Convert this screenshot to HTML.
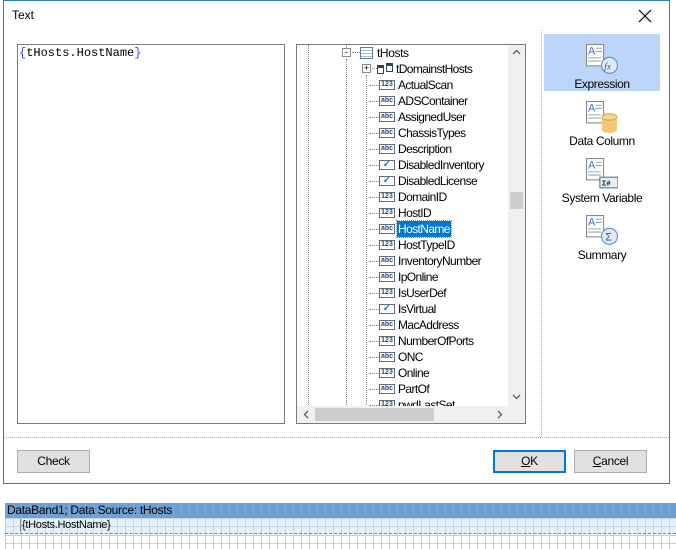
<!DOCTYPE html>
<html><head><meta charset="utf-8"><style>
*{margin:0;padding:0;box-sizing:border-box}
body{width:676px;height:549px;background:#fff;position:relative;overflow:hidden;font-family:"Liberation Sans",sans-serif;font-size:12px;color:#000}
.abs{position:absolute}
.win{left:3px;top:0;width:667px;height:484px;border:1px solid #2b79c9}
.btn{position:absolute;height:23px;background:#e1e1e1;border:1px solid #adadad;text-align:center;line-height:20px;font-size:12px;letter-spacing:-0.3px}
.row{position:absolute;left:0;height:16px;line-height:16px;white-space:nowrap;letter-spacing:-0.6px}
.ic{position:absolute;left:82px;top:3px;width:16px;height:10px;border:1px solid #5a6f88;font-size:7px;line-height:8px;text-align:center;font-weight:bold;color:#2d4a73;letter-spacing:0}
.dh{position:absolute;left:72px;top:8px;width:10px;border-top:1px dotted #888}
.tx{position:absolute;left:100px;top:0;padding:0 1px}
.lbl{position:absolute;width:116px;text-align:center;font-size:12px;letter-spacing:-0.4px}
</style></head><body>
<div class="abs win"></div>
<div class="abs" style="left:12px;top:8px;font-size:12px">Text</div>
<svg class="abs" style="left:638px;top:9px" width="14" height="14"><path d="M1 1L13 13M13 1L1 13" stroke="#000" stroke-width="1.2"/></svg>

<div class="abs" style="left:17px;top:44px;width:268px;height:380px;border:1px solid #7a7a7a"></div>
<div class="abs" style="left:19px;top:46px;font-family:'Liberation Mono',monospace;font-size:12px"><span style="color:#4040ff">{</span>tHosts.HostName<span style="color:#4040ff">}</span></div>

<div class="abs" style="left:296px;top:44px;width:230px;height:380px;border:1px solid #7a7a7a;overflow:hidden">
  <div class="abs" style="left:11px;top:0;height:362px;border-left:1px dotted #888"></div>
  <div class="abs" style="left:49px;top:0;height:3px;border-left:1px dotted #888"></div>
  <div class="abs" style="left:49px;top:14px;height:350px;border-left:1px dotted #888"></div>
  <div class="abs" style="left:69px;top:30px;height:340px;border-left:1px dotted #888"></div>
  <div class="abs" style="left:45px;top:3px;width:9px;height:9px;border:1px solid #888;background:#fff;font-size:9px;line-height:6px;text-align:center">-</div>
  <div class="abs" style="left:55px;top:7px;width:8px;border-top:1px dotted #888"></div>
  <div class="abs" style="left:63px;top:2px;width:13px;height:12px;border:1px solid #5a7aa8;background:repeating-linear-gradient(#fff 0 2px,#a9bdd6 2px 3px)"></div>
  <div class="abs" style="left:80px;top:0;line-height:16px;letter-spacing:-0.4px">tHosts</div>
  <div class="abs" style="left:65px;top:19px;width:9px;height:9px;border:1px solid #888;background:#fff;font-size:9px;line-height:7px;text-align:center">+</div>
  <div class="abs" style="left:75px;top:23px;width:5px;border-top:1px dotted #888"></div>
  <div class="abs" style="left:80px;top:20px;width:7px;height:9px;border:1px solid #345;border-top:3px solid #345"></div>
  <div class="abs" style="left:89px;top:18px;width:7px;height:9px;border:1px solid #345;border-top:3px solid #345"></div>
  <div class="abs" style="left:99px;top:16px;line-height:16px;letter-spacing:-0.6px">tDomainstHosts</div>
  <div class="abs" style="left:0;top:32px;width:212px">
   <div class="row" style="top:0"><div class="dh"></div><div class="ic">123</div><div class="tx">ActualScan</div></div>
   <div class="row" style="top:16px"><div class="dh"></div><div class="ic">abc</div><div class="tx">ADSContainer</div></div>
   <div class="row" style="top:32px"><div class="dh"></div><div class="ic">abc</div><div class="tx">AssignedUser</div></div>
   <div class="row" style="top:48px"><div class="dh"></div><div class="ic">abc</div><div class="tx">ChassisTypes</div></div>
   <div class="row" style="top:64px"><div class="dh"></div><div class="ic">abc</div><div class="tx">Description</div></div>
   <div class="row" style="top:80px"><div class="dh"></div><div class="ic" style="color:#3a6fc0;font-size:10px">✓</div><div class="tx">DisabledInventory</div></div>
   <div class="row" style="top:96px"><div class="dh"></div><div class="ic" style="color:#3a6fc0;font-size:10px">✓</div><div class="tx">DisabledLicense</div></div>
   <div class="row" style="top:112px"><div class="dh"></div><div class="ic">123</div><div class="tx">DomainID</div></div>
   <div class="row" style="top:128px"><div class="dh"></div><div class="ic">123</div><div class="tx">HostID</div></div>
   <div class="row" style="top:144px"><div class="dh"></div><div class="ic">abc</div><div class="tx" style="background:#0078d7;color:#fff;outline:1px dotted #e08020">HostName</div></div>
   <div class="row" style="top:160px"><div class="dh"></div><div class="ic">123</div><div class="tx">HostTypeID</div></div>
   <div class="row" style="top:176px"><div class="dh"></div><div class="ic">abc</div><div class="tx">InventoryNumber</div></div>
   <div class="row" style="top:192px"><div class="dh"></div><div class="ic">abc</div><div class="tx">IpOnline</div></div>
   <div class="row" style="top:208px"><div class="dh"></div><div class="ic">123</div><div class="tx">IsUserDef</div></div>
   <div class="row" style="top:224px"><div class="dh"></div><div class="ic" style="color:#3a6fc0;font-size:10px">✓</div><div class="tx">IsVirtual</div></div>
   <div class="row" style="top:240px"><div class="dh"></div><div class="ic">abc</div><div class="tx">MacAddress</div></div>
   <div class="row" style="top:256px"><div class="dh"></div><div class="ic">123</div><div class="tx">NumberOfPorts</div></div>
   <div class="row" style="top:272px"><div class="dh"></div><div class="ic">abc</div><div class="tx">ONC</div></div>
   <div class="row" style="top:288px"><div class="dh"></div><div class="ic">123</div><div class="tx">Online</div></div>
   <div class="row" style="top:304px"><div class="dh"></div><div class="ic">abc</div><div class="tx">PartOf</div></div>
   <div class="row" style="top:320px"><div class="dh"></div><div class="ic">123</div><div class="tx">pwdLastSet</div></div>
  </div>
  <div class="abs" style="left:211px;top:0;width:17px;height:361px;background:#f0f0f0"></div>
  <div class="abs" style="left:213px;top:147px;width:13px;height:17px;background:#cdcdcd"></div>
  <svg class="abs" style="left:215px;top:4px" width="9" height="6"><path d="M1 5L4.5 1.5L8 5" stroke="#606060" fill="none" stroke-width="1.3"/></svg>
  <svg class="abs" style="left:215px;top:349px" width="9" height="6"><path d="M1 1L4.5 4.5L8 1" stroke="#606060" fill="none" stroke-width="1.3"/></svg>
  <div class="abs" style="left:0;top:361px;width:228px;height:17px;background:#f0f0f0"></div>
  <div class="abs" style="left:18px;top:363px;width:119px;height:13px;background:#cdcdcd"></div>
  <svg class="abs" style="left:6px;top:365px" width="6" height="9"><path d="M5 1L1.5 4.5L5 8" stroke="#606060" fill="none" stroke-width="1.3"/></svg>
  <svg class="abs" style="left:200px;top:365px" width="6" height="9"><path d="M1 1L4.5 4.5L1 8" stroke="#606060" fill="none" stroke-width="1.3"/></svg>
</div>

<div class="abs" style="left:541px;top:30px;height:407px;border-left:1px dotted #aaa"></div>
<div class="abs" style="left:4px;top:437px;width:665px;border-top:1px dotted #aaa"></div>

<div class="abs" style="left:544px;top:34px;width:116px;height:57px;background:#bcd5f8"></div>
<svg class="abs" style="left:586px;top:44px" width="32" height="32" viewBox="0 0 30 30" >
 <rect x="0.5" y="0.5" width="16" height="20" fill="#fff" stroke="#888"/>
 <text x="2" y="10" font-size="10" font-family="Liberation Sans" fill="#3a6fc0">A</text>
 <path d="M9 4h6M9 7h6M2 13h12M2 16h12" stroke="#9aa"/>
 <circle cx="22" cy="20" r="7.5" fill="#dfe9f7" stroke="#5a8ad0"/>
 <text x="17" y="24" font-size="9" font-style="italic" font-family="Liberation Serif" fill="#2a5aa0">fx</text>
</svg>
<div class="lbl" style="left:544px;top:77px">Expression</div>
<svg class="abs" style="left:586px;top:101px" width="32" height="32" viewBox="0 0 30 30">
 <rect x="0.5" y="0.5" width="16" height="20" fill="#fff" stroke="#888"/>
 <text x="2" y="10" font-size="10" font-family="Liberation Sans" fill="#3a6fc0">A</text>
 <path d="M9 4h6M9 7h6M2 13h12M2 16h12" stroke="#9aa"/>
 <path d="M15 15v12a7 3 0 0 0 14 0v-12z" fill="#f0c878"/>
 <ellipse cx="22" cy="15" rx="7" ry="3" fill="#f6d890" stroke="#d0a850"/>
</svg>
<div class="lbl" style="left:544px;top:134px">Data Column</div>
<svg class="abs" style="left:586px;top:158px" width="32" height="32" viewBox="0 0 30 30">
 <rect x="0.5" y="0.5" width="16" height="20" fill="#fff" stroke="#888"/>
 <text x="2" y="10" font-size="10" font-family="Liberation Sans" fill="#3a6fc0">A</text>
 <path d="M9 4h6M9 7h6M2 13h12M2 16h12" stroke="#9aa"/>
 <rect x="13" y="18" width="17" height="10" fill="#e8eef6" stroke="#5a6f88"/>
 <text x="15" y="26" font-size="7" font-weight="bold" font-family="Liberation Sans" fill="#223">Σ#</text>
</svg>
<div class="lbl" style="left:544px;top:191px">System Variable</div>
<svg class="abs" style="left:586px;top:215px" width="32" height="32" viewBox="0 0 30 30">
 <rect x="0.5" y="0.5" width="16" height="20" fill="#fff" stroke="#888"/>
 <text x="2" y="10" font-size="10" font-family="Liberation Sans" fill="#3a6fc0">A</text>
 <path d="M9 4h6M9 7h6M2 13h12M2 16h12" stroke="#9aa"/>
 <circle cx="22" cy="20" r="7.5" fill="#dfe9f7" stroke="#5a8ad0"/>
 <text x="18" y="24" font-size="10" font-family="Liberation Sans" fill="#2a5aa0">Σ</text>
</svg>
<div class="lbl" style="left:544px;top:248px">Summary</div>

<div class="btn" style="left:17px;top:450px;width:73px">Check</div>
<div class="btn" style="left:493px;top:450px;width:73px;border:2px solid #0078d7;line-height:19px"><u>O</u>K</div>
<div class="btn" style="left:574px;top:450px;width:73px"><u>C</u>ancel</div>

<div class="abs" style="left:5px;top:503px;width:671px;height:46px;background:#fff;background-image:linear-gradient(90deg,#ccc 1px,transparent 1px),linear-gradient(#ccc 1px,transparent 1px);background-size:8px 8px"></div>
<div class="abs" style="left:5px;top:503px;width:671px;height:15px;background-color:#6d9fd4;background-image:linear-gradient(90deg,rgba(255,255,255,.12) 1px,transparent 1px);background-size:8px 8px"></div>
<div class="abs" style="left:5px;top:518px;width:671px;height:16px;background-color:#e2f1fa;background-image:linear-gradient(90deg,#c6d6e0 1px,transparent 1px),linear-gradient(#c6d6e0 1px,transparent 1px);background-size:8px 8px;border-bottom:1px dashed #5a8fc8"></div>
<div class="abs" style="left:7px;top:504px;line-height:13px;letter-spacing:-0.3px">DataBand1; Data Source: tHosts</div>
<div class="abs" style="left:20px;top:519px;line-height:13px;font-size:11px;border-left:1px solid #888;padding-left:1px;letter-spacing:-0.3px">{tHosts.HostName}</div>
</body></html>
